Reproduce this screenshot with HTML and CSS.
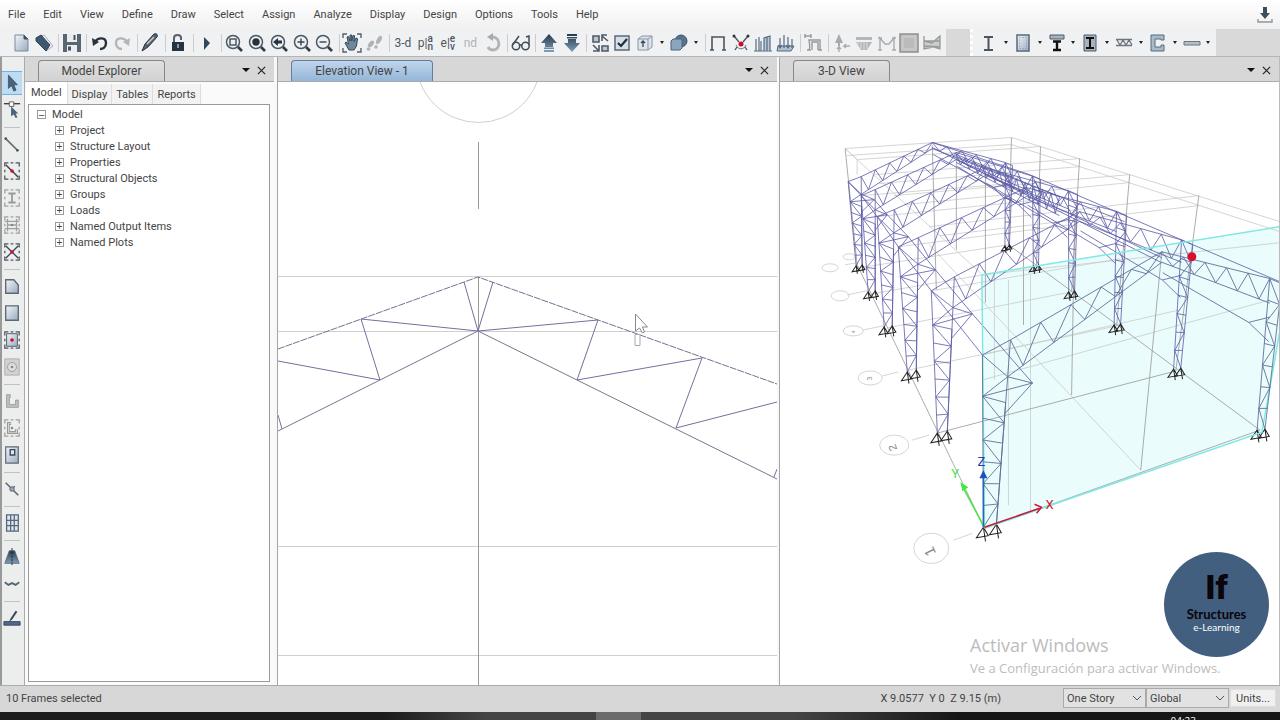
FILE: index.html
```html
<!DOCTYPE html>
<html lang="en">
<head>
<meta charset="utf-8">
<title>Structural Model</title>
<link rel="stylesheet" href="styles.css">
</head>
<body>
<svg class="defs" aria-hidden="true">
  <defs>
    <linearGradient id="steel" x1="0" y1="0" x2="1" y2="1"><stop offset="0" stop-color="#f2f5f9"/><stop offset="1" stop-color="#9aabc0"/></linearGradient>
    <linearGradient id="deep" x1="0" y1="0" x2="0" y2="1"><stop offset="0" stop-color="#26384c"/><stop offset="1" stop-color="#7f9fb8"/></linearGradient>
    <symbol id="lens" viewBox="0 0 20 20"><circle cx="9" cy="9" r="6.5" fill="#eef1f4" stroke="#4d5762" stroke-width="1.5"/><path d="M14 14l4 4" stroke="#333b44" stroke-width="2.6"/></symbol>
    <symbol id="dashbox" viewBox="0 0 20 20"><path d="M2 5V1h4M8.500 1h3M14 1h4v4M18 8.500v3M18 15v4h-4M11.500 19h-3M6 19H2v-4M2 11.500v-3" fill="none" stroke="currentColor" stroke-width="1.4"/></symbol>
    <symbol id="arrow" viewBox="0 0 20 20"><path d="M6 1v15l3.500-3 2.500 6 2.500-1-2.500-6h4z" fill="#4b6279" stroke="#2f4257" stroke-width=".7"/></symbol>
  </defs>
</svg>
<div class="app">
  <header class="top">
    <nav class="menu">
      <button>File</button><button>Edit</button><button>View</button><button>Define</button><button>Draw</button><button>Select</button><button>Assign</button><button>Analyze</button><button>Display</button><button>Design</button><button>Options</button><button>Tools</button><button>Help</button>
      <button class="download" aria-label="Download"><svg viewBox="0 0 16 16"><path d="M6 0h4v6h3l-5 6-5-6h3z" fill="#3c4d5c"/><path d="M1 12v3h14v-3" fill="none" stroke="#8b959d" stroke-width="1.4"/></svg></button>
    </nav>
    <div class="bars">
      <div class="bar bar-main">
        <button aria-label="New"><svg viewBox="0 0 20 20"><path d="M4 2h9l4 4v12H4z" fill="url(#steel)" stroke="#7d8a99"/><path d="M13 2v4h4" fill="#3f5065" stroke="#3f5065"/></svg></button>
        <button aria-label="Open"><svg viewBox="0 0 20 20"><path d="M2 5l8-3 9 11-7 5z" fill="#f4f5f6" stroke="#a5adb5"/><path d="M2 5l5-3 9 10-4 6L2 8z" fill="#3e5870" stroke="#2f4256"/></svg></button>
        <i class="sep"></i>
        <button aria-label="Save"><svg viewBox="0 0 20 20"><path d="M1 1h18v18H1z" fill="#5a6570"/><path d="M5 1h10v8H5zM5 12h10v7H5z" fill="#e9edf1"/><path d="M11.500 2h2v5h-2zM6 13.500h3v4H6z" fill="#49545f"/></svg></button>
        <i class="sep"></i>
        <button aria-label="Undo"><svg viewBox="0 0 20 20"><path d="M5 9c3-5 11-5 11 1 0 4-3 6-6 6" fill="none" stroke="#26333f" stroke-width="2.400"/><path d="M2 5l1 8 6-4z" fill="#26333f"/></svg></button>
        <button aria-label="Redo"><svg viewBox="0 0 20 20"><path d="M15 9C12 4 4 4 4 10c0 4 3 6 6 6" fill="none" stroke="#b5b5b5" stroke-width="2.400"/><path d="M18 5l-1 8-6-4z" fill="#b5b5b5"/></svg></button>
        <i class="sep"></i>
        <button aria-label="Edit"><svg viewBox="0 0 20 20"><path d="M2 18l3-7L14 1c3-1 4 1 3 3L8 14z" fill="#59636d" stroke="#29323b"/><path d="M7 11l7-7" stroke="#c8d0d8" stroke-width="1.500"/></svg></button>
        <i class="sep"></i>
        <button aria-label="Unlock"><svg viewBox="0 0 20 20"><path d="M6 9V5c0-4 7-4 7 0v2" fill="none" stroke="#56616b" stroke-width="2"/><path d="M4 9h12v9H4z" fill="#25323f"/><path d="M9 11h2v4H9z" fill="#8798a8"/></svg></button>
        <i class="sep"></i>
        <button aria-label="Run"><svg viewBox="0 0 20 20"><path d="M8 4l6 6-6 7z" fill="#33475a"/></svg></button>
        <i class="sep"></i>
        <button aria-label="Zoom window"><svg viewBox="0 0 20 20"><use href="#lens"/><path d="M6 6h6v6H6z" fill="none" stroke="#4d5762" stroke-width="1.500"/></svg></button>
        <button aria-label="Zoom full"><svg viewBox="0 0 20 20"><use href="#lens"/><circle cx="9" cy="9" r="3.700" fill="#26333f"/></svg></button>
        <button aria-label="Zoom previous"><svg viewBox="0 0 20 20"><use href="#lens"/><path d="M4 9l5-4v2.500h4v3H9V13z" fill="#26333f"/></svg></button>
        <button aria-label="Zoom in"><svg viewBox="0 0 20 20"><use href="#lens"/><path d="M5.500 9h7M9 5.500v7" stroke="#39444e" stroke-width="1.400"/></svg></button>
        <button aria-label="Zoom out"><svg viewBox="0 0 20 20"><use href="#lens"/><path d="M5.500 9h7" stroke="#39444e" stroke-width="1.400"/></svg></button>
        <i class="sep"></i>
        <button aria-label="Pan"><svg viewBox="0 0 20 20"><path d="M1 5V1h4M15 1h4v4M19 15v4h-4M5 19H1v-4" fill="none" stroke="#56616b" stroke-width="1.400"/><path d="M7 17L3 10l1-1 2.500 2L5 4l1.500-.5L8 8V2h1.700v6L11 2.500l1.600.2-.6 6L14 5l1.500.6-1 7.400-2.500 4z" fill="#71889c" stroke="#34485b"/></svg></button>
        <button aria-label="Walk"><svg viewBox="0 0 20 20" fill="#b3b3b3"><ellipse cx="6" cy="11" rx="2.200" ry="4" transform="rotate(40 6 11)"/><ellipse cx="14" cy="7" rx="2.200" ry="4.500" transform="rotate(30 14 7)"/><circle cx="3.500" cy="16" r="1.800"/><circle cx="11" cy="14" r="1.800"/></svg></button>
        <i class="sep"></i>
        <button class="word">3-d</button>
        <button class="word" aria-label="Plan">p|<span class="pair"><b>a</b><b>n</b></span></button>
        <button class="word" aria-label="Elevation">e|<span class="pair"><b>e</b><b>v</b></span></button>
        <button class="word off">nd</button>
        <button aria-label="Rotate"><svg viewBox="0 0 20 20"><path d="M9 4c9 0 9 13 1 13-2 0-4-1-5-3" fill="none" stroke="#b3b3b3" stroke-width="2.800"/><path d="M10 0v8L4 4z" fill="#aaa"/></svg></button>
        <i class="sep"></i>
        <button aria-label="Object view"><svg viewBox="0 0 20 20" fill="#edf0f2" stroke="#414c57" stroke-width="1.500"><circle cx="5" cy="13" r="3.700"/><circle cx="14.500" cy="13" r="3.700"/><path d="M1.500 12L8 3M18 12V3l-3 1M8.500 12h2.500" fill="none"/></svg></button>
        <i class="sep"></i>
        <button aria-label="Move up"><svg viewBox="0 0 20 20"><path d="M10 1l8 9h-4v4H6v-4H2zM5 14.500h10v1.500H5zM5 17h10v2H5z" fill="url(#deep)"/></svg></button>
        <button aria-label="Move down"><svg viewBox="0 0 20 20"><path d="M10 19l8-9h-4V6H6v4H2zM5 4h10v1.500H5zM5 1h10v2H5z" fill="url(#deep)"/></svg></button>
        <i class="sep"></i>
        <button aria-label="Shrink objects"><svg viewBox="0 0 20 20"><path d="M3 3h6v6H3zM12 13h6v5h-6z" fill="#bcc7d2" stroke="#4f5b67" stroke-width="1.600"/><path d="M18 8l-6-5M12 8V2h5M3 12l6 6M9 12v6H3" fill="none" stroke="#4f5b67" stroke-width="1.600"/></svg></button>
        <button aria-label="Display options"><svg viewBox="0 0 20 20"><path d="M3 3h14v14H3z" fill="#d5dfe8" stroke="#59697a" stroke-width="1.500"/><path d="M6 10l3 3 6-7" fill="none" stroke="#222d39" stroke-width="2.200"/></svg></button>
        <button aria-label="Assignments"><svg viewBox="0 0 20 20"><path d="M3 6l4-3h10v11l-4 3H3zM3 6h10v11M13 6l4-3" fill="#dde4eb" stroke="#8795a3"/><path d="M8 8v6M6 10l2-2 2 2" fill="none" stroke="#344659" stroke-width="1.300"/></svg></button>
        <button class="drop" aria-label="Assignment list"></button>
        <button aria-label="Solids"><svg viewBox="0 0 20 20"><circle cx="12" cy="8" r="6" fill="#57738f" stroke="#3d536a"/><path d="M2 8l2-2h9v9l-2 2H2z" fill="#8ba5bd" stroke="#4c647c"/></svg></button>
        <button class="drop" aria-label="Solids list"></button>
        <i class="sep"></i>
        <button aria-label="Frame shape"><svg viewBox="0 0 20 20"><path d="M4 17V4h12v13M2 17h4M14 17h4" fill="none" stroke="#4c545d" stroke-width="1.600"/></svg></button>
        <button aria-label="Joint loads"><svg viewBox="0 0 20 20"><path d="M3 3l5 6M17 3l-5 6M6 14l-2 3M14 14l2 3" fill="none" stroke="#49535c" stroke-width="1.300"/><circle cx="3" cy="3" r="1.500" fill="#333"/><circle cx="17" cy="3" r="1.500" fill="#333"/><circle cx="10" cy="11" r="2.500" fill="#c8102a"/><path d="M5 12c2 5 8 5 10 0" fill="none" stroke="#66717c"/></svg></button>
        <button aria-label="Frame loads"><svg viewBox="0 0 20 20"><path d="M11 17V5l6-2v14z" fill="#b9c8d8"/><path d="M1 18h18M3 18V6M6 18V4M11 18V5l6-2v15M14 4v14M8 18V8" fill="none" stroke="#566b80" stroke-width="1.200"/></svg></button>
        <button aria-label="Shell loads"><svg viewBox="0 0 20 20"><path d="M2 13h16l-3 5H1z" fill="#afc0d0" stroke="#566b80"/><path d="M4 5v10M8 2v13M12 4v11M16 6v9M2 12l2 3 2-3M10 12l2 3 2-3" fill="none" stroke="#566b80" stroke-width="1.200"/></svg></button>
        <i class="sep"></i>
        <button aria-label="Deformed shape"><svg viewBox="0 0 20 20" fill="none" stroke="#999" stroke-width="1.400"><path d="M5 17c2-4 0-7 0-10h11v10M3 17h4M14 17h4M8 17V9h6v8M1 1v4M1 3h6M7 1v4"/></svg></button>
        <i class="sep"></i>
        <button aria-label="Reactions"><svg viewBox="0 0 20 20"><path d="M7 1l4 9H3zM6 10h2v3H6z" fill="#aaa"/><path d="M7 19v-6M5 16l2-2 2 2M18 13h-6l2-2M12 13l2 2" fill="none" stroke="#aaa" stroke-width="1.400"/></svg></button>
        <button aria-label="Soil pressure"><svg viewBox="0 0 20 20"><path d="M2 4h16v3H2zM2 9h16l-5 8H7z" fill="#b5b5b5"/><path d="M4 9v4M7 9v7M10 9v8M13 9v7" stroke="#ddd"/></svg></button>
        <button aria-label="Force diagrams"><svg viewBox="0 0 20 20"><path d="M3 17V5l5 6h4l5-6v12M1 17h4M15 17h4M1 5h4M15 5h4" fill="none" stroke="#aaa" stroke-width="1.400"/></svg></button>
        <button aria-label="Shell stresses"><svg viewBox="0 0 20 20"><path d="M1 1h18v18H1z" fill="#c3c3c3" stroke="#909090" stroke-width="1.500"/><path d="M4 4h12v12H4z" fill="#bbb" stroke="#d0d0d0"/></svg></button>
        <button aria-label="Strip forces"><svg viewBox="0 0 20 20"><path d="M2 8l8 2 8-7v13l-7-2-9 2zM2 3v13M2 8h16M2 13l16 1" fill="#ccc" stroke="#999" stroke-width="1.300"/></svg></button>
      </div>
      <div class="bar bar-sections">
        <button aria-label="Steel frame"><svg viewBox="0 0 20 20"><path d="M5 4h9M9.500 4v12M5 17h9" fill="none" stroke="#4c545d" stroke-width="2"/></svg></button><button class="drop" aria-label="Steel frame list"></button>
        <button aria-label="Concrete frame"><svg viewBox="0 0 20 20"><path d="M4 2h12v16H4z" fill="url(#steel)" stroke="#58687a" stroke-width="1.500"/><path d="M6.500 4.500h7v11h-7z" fill="none" stroke="#7f93aa" stroke-dasharray="1 2"/></svg></button><button class="drop" aria-label="Concrete frame list"></button>
        <button aria-label="Composite beam"><svg viewBox="0 0 20 20"><path d="M3 2h14v4H3z" fill="#a9b3be" stroke="#4f5a66"/><path d="M6 8.500h8M10 8v9M6 17h8" stroke="#111" stroke-width="2.400"/></svg></button><button class="drop" aria-label="Composite beam list"></button>
        <button aria-label="Composite column"><svg viewBox="0 0 20 20"><path d="M4 2h12v16H4z" fill="#a7b2be" stroke="#4f5a66"/><path d="M6 5h8M10 5v10M6 15h8" stroke="#111" stroke-width="2"/></svg></button><button class="drop" aria-label="Composite column list"></button>
        <button aria-label="Steel joist"><svg viewBox="0 0 20 20"><path d="M2 6.500h16M2 12.500h16M3 7l3 5 3-5 3 5 3-5 3 5" fill="none" stroke="#6c747d" stroke-width="1.300"/></svg></button><button class="drop" aria-label="Steel joist list"></button>
        <button aria-label="Shear wall"><svg viewBox="0 0 20 20"><path d="M3 2h13v5h-3V6H7v8h6v-2h3v6H3z" fill="#a9bac9" stroke="#596b7c"/></svg></button><button class="drop" aria-label="Shear wall list"></button>
        <button aria-label="Slab"><svg viewBox="0 0 20 20"><path d="M2 8.500h16v3.500H2z" fill="#b8bec5" stroke="#6d757d"/></svg></button><button class="drop" aria-label="Slab list"></button>
      </div>
    </div>
  </header>

  <main class="work">
    <aside class="tools">
      <button class="picked" aria-label="Select"><svg viewBox="0 0 20 20"><use href="#arrow"/></svg></button>
      <button aria-label="Reshape"><svg viewBox="0 0 20 20"><path d="M1 3h18" stroke="#444" stroke-width="1.500"/><path d="M7 1h5v5H7z" fill="#fff" stroke="#555"/><path d="M9 6v11l3-2 2 4 2-1-2-4h3z" fill="#4b6279"/></svg></button>
      <i class="rule"></i>
      <button aria-label="Draw beam"><svg viewBox="0 0 20 20"><path d="M3 4l13 13" stroke="#606b75" stroke-width="1.800"/><circle cx="3" cy="4" r="1.500" fill="#4b5660"/><circle cx="16" cy="17" r="1.500" fill="#4b5660"/></svg></button>
      <button class="dark" aria-label="Quick beam"><svg viewBox="0 0 20 20"><use href="#dashbox"/><path d="M3 3l14 14" stroke="#3b4753" stroke-width="1.700"/><circle cx="10" cy="10" r="2" fill="#c8102a"/></svg></button>
      <button class="faint" aria-label="Quick column"><svg viewBox="0 0 20 20"><use href="#dashbox"/><path d="M6 5h8M10 5v10M6 15h8" stroke="#999" stroke-width="2"/></svg></button>
      <button class="faint" aria-label="Secondary beams"><svg viewBox="0 0 20 20"><use href="#dashbox"/><path d="M5 3v14M15 3v14M2 6h16M2 14h16M5 10h10" stroke="#a0a0a0" stroke-width="1.400"/><circle cx="10" cy="10" r="1.500" fill="#888"/></svg></button>
      <button class="dark" aria-label="Quick braces"><svg viewBox="0 0 20 20"><use href="#dashbox"/><path d="M3 3l14 14M17 3L3 17" stroke="#3b4753" stroke-width="1.500"/><circle cx="10" cy="10" r="2" fill="#c8102a"/></svg></button>
      <i class="rule"></i>
      <button aria-label="Draw area"><svg viewBox="0 0 20 20"><path d="M3 3h9l5 6v9H3z" fill="url(#steel)" stroke="#5d6874" stroke-width="1.500"/></svg></button>
      <button aria-label="Draw rectangle"><svg viewBox="0 0 20 20"><path d="M3 2h14v16H3z" fill="url(#steel)" stroke="#5d6874" stroke-width="1.500"/></svg></button>
      <button class="dark" aria-label="Quick area"><svg viewBox="0 0 20 20"><path d="M4 3h12v14H4z" fill="url(#steel)"/><use href="#dashbox"/><path d="M4 3h12v14H4z" fill="none" stroke="#4b5661"/><circle cx="10" cy="10" r="2" fill="#c8102a"/></svg></button>
      <button aria-label="Quick opening"><svg viewBox="0 0 20 20"><path d="M2 1h16v18H2z" fill="#d2d2d0" stroke="#aaa"/><circle cx="10" cy="10" r="5" fill="#dededc" stroke="#999"/><circle cx="10" cy="10" r="1.500" fill="#888"/></svg></button>
      <i class="rule"></i>
      <button aria-label="Draw wall"><svg viewBox="0 0 20 20"><path d="M8 3H4v14h13V9h-3v5H7V6h1z" fill="#c2c2c0" stroke="#999"/></svg></button>
      <button class="faint" aria-label="Quick wall"><svg viewBox="0 0 20 20"><use href="#dashbox"/><path d="M9 4H5v12h11v-5M9 6H7v8h7v-3" fill="none" stroke="#999" stroke-width="1.200"/><circle cx="10" cy="10" r="1.500" fill="#888"/></svg></button>
      <button aria-label="Wall opening"><svg viewBox="0 0 20 20"><path d="M3 1h14v18H3z" fill="url(#steel)" stroke="#5d6874" stroke-width="1.300"/><path d="M8 4h5v6H8z" fill="#dfe6ee" stroke="#3b4753" stroke-width="1.500"/></svg></button>
      <i class="rule"></i>
      <button aria-label="Link"><svg viewBox="0 0 20 20"><path d="M3 3l14 14M8 12l5-5" stroke="#5b6670" stroke-width="1.700"/><circle cx="10" cy="10" r="2.500" fill="#9aa4ad" stroke="#5b6670"/></svg></button>
      <i class="rule"></i>
      <button aria-label="Grid"><svg viewBox="0 0 20 20"><path d="M4 1h13v18H4zM4 7h13M4 13h13M8.500 1v18M12.500 1v18" fill="#dfe7ee" stroke="#53667a" stroke-width="1.400"/></svg></button>
      <i class="rule"></i>
      <button aria-label="Tower"><svg viewBox="0 0 20 20"><path d="M7 3h6l5 14H2z" fill="url(#deep)" stroke="#5b6d7f"/><path d="M10 0v20" stroke="#222" stroke-dasharray="3 1"/></svg></button>
      <button aria-label="Tendon"><svg viewBox="0 0 20 20"><path d="M2 8l4 3 4-2 4 2 4-3" fill="none" stroke="#546474" stroke-width="2"/></svg></button>
      <i class="rule"></i>
      <button aria-label="Strip"><svg viewBox="0 0 20 20"><path d="M8 11l6-9 2 1-6 9-3 2z" fill="#3b4753"/><path d="M1 14h18v4H1z" fill="#50698a" stroke="#31445a"/></svg></button>
    </aside>

    <section class="pane explorer">
      <div class="title"><h2 class="cap cap-explorer">Model Explorer</h2><button class="tri" aria-label="Explorer menu"></button><button class="close" aria-label="Close explorer"><svg viewBox="0 0 10 10"><path d="M1 1l8 8M9 1L1 9"/></svg></button></div>
      <div class="tabs"><button class="on">Model</button><button>Display</button><button>Tables</button><button>Reports</button></div>
      <div class="treebox">
        <ul class="tree">
          <li><span class="node open">Model</span>
            <ul>
              <li><span class="node">Project</span></li>
              <li><span class="node">Structure Layout</span></li>
              <li><span class="node">Properties</span></li>
              <li><span class="node">Structural Objects</span></li>
              <li><span class="node">Groups</span></li>
              <li><span class="node">Loads</span></li>
              <li><span class="node">Named Output Items</span></li>
              <li><span class="node">Named Plots</span></li>
            </ul>
          </li>
        </ul>
      </div>
    </section>

    <section class="pane view view-elev">
      <div class="title"><h2 class="cap cap-elev">Elevation View - 1</h2><button class="tri" aria-label="Elevation menu"></button><button class="close" aria-label="Close elevation"><svg viewBox="0 0 10 10"><path d="M1 1l8 8M9 1L1 9"/></svg></button></div>
      <svg class="scene" viewBox="278 82 499 603" preserveAspectRatio="xMidYMid slice" role="img" aria-label="Elevation of roof truss">
        <g fill="none" stroke="#cfcfcf" stroke-width="1">
          <circle cx="478.500" cy="60" r="62.500"/>
          <path d="M278 276.500H777M278 331.500H777M278 546.500H777M278 655.500H777"/>
          <path d="M478.500 142v67M478.500 277v408" stroke="#999"/>
        </g>
        <g fill="none" stroke="#71719f" stroke-width="1">
          <path d="M278 349L478 277L777 384" stroke="#73738f" stroke-dasharray="7 1"/>
          <path d="M278 431L478 331L777 479" stroke="#777790"/>
          <path d="M464 282L478 331L493 282M278 361L380 380L361 319L478 331L598 320L577 380L702 358L676 428L777 402M278 415l4 14M777 469l-3 8"/>
        </g>
        <path d="M635.500 314v17l4-3 3 5 2-1-2-5h5z" fill="#fff" stroke="#888"/>
        <path d="M635 334.500h5v11h-5z" fill="#fff" stroke="#aaa"/>
      </svg>
    </section>

    <section class="pane view view-three">
      <div class="title"><h2 class="cap cap-three">3-D View</h2><button class="tri" aria-label="3-D menu"></button><button class="close" aria-label="Close 3-D"><svg viewBox="0 0 10 10"><path d="M1 1l8 8M9 1L1 9"/></svg></button></div>
      <svg class="scene" viewBox="781 82 498 603" preserveAspectRatio="xMidYMid slice" role="img" aria-label="3-D model of steel hall">
        <path d="M982 275L1280 227V335L1262 432L985 528z" fill="#eafcfc"/>
        <g fill="none" stroke="#cbcbcb" stroke-width=".8">
          <path d="M846 149L1012 138L1280 222M848 156L1012 145L1280 232M846 149L983 275M846 149L858 160V175M859 160L1041 147M876 175L1080 159M895 196L1130 175M930 227L1199 196M880 184L1080 167M905 205L1130 183M940 236L1199 206M983 275L1280 243M862 196L1012 184M878 217L1040 200M899 247L1072 225M932 291L1120 259M983 355L1180 310"/>
          <path d="M860 268L1009 245M872 294L1037 266M888 328L1072 292M910 370L1117 326M1141 470L930 245M983 380L1270 300M1009 280V505M1031 275V510M995 274V380"/>
          <path d="M846 265l12-2M848 295l20-4M864 330l20-4M883 376l16-4M913 440l17-5M954 540l19-7"/>
          <ellipse cx="831" cy="268" rx="8" ry="4"/><ellipse cx="850" cy="257" rx="6" ry="3"/><ellipse cx="841" cy="296" rx="9" ry="5"/><ellipse cx="854" cy="331" rx="10" ry="5"/><ellipse cx="871" cy="378" rx="12" ry="7"/><ellipse cx="895" cy="445" rx="14.500" ry="10"/><ellipse cx="932" cy="548" rx="17.500" ry="15"/>
        </g>
        <g fill="none" stroke="#a3a3a3" stroke-width=".9">
          <path d="M846 149L858 265L985 528L1260 430L1009 245M938 433L1176 371M1012 138L1009 245M933 146L937 290M957 154V250M986 168V303M1041 147L1037 266M1080 159L1072 292M1130 175L1117 326M1199 196L1176 371M1024 190V325M1075 220L1072 395M1162 252L1141 470"/>
        </g>
        <g class="marks"><text transform="translate(937 553) rotate(-115)" font-size="15">1</text><text transform="translate(898 449) rotate(-110)" font-size="11">2</text><text transform="translate(873 380) rotate(-100)" font-size="7">3</text><text transform="translate(856 333) rotate(-100)" font-size="5">4</text></g>
        <g id="members" fill="none" stroke="#5a5aa6" stroke-width=".8"></g>
        <g id="supports" fill="none" stroke="#222" stroke-width="1"></g>
        <path d="M985 528L982.500 275L1280 227M985 528L1262 432L1280 330" fill="none" stroke="#7fe9e6" stroke-width="1.500"/>
        <g id="front" fill="none" stroke="#60709a" stroke-width=".9"></g>
        <circle cx="1192" cy="257" r="4.500" fill="#d80f2f"/>
        <g fill="none" stroke-width="1.500">
          <path d="M985 527L963 486" stroke="#45e545"/><path d="M961 482l8 5-6 4z" fill="#45e545"/>
          <path d="M984 527V474" stroke="#2467b8"/><path d="M984 470l4 8h-8z" fill="#1c50c0"/>
          <path d="M985 527L1040 508M1035 504l7 3-5 6" stroke="#c51c35"/>
        </g>
        <g class="axes" font-size="13"><text x="978" y="466" fill="#1c41c0">Z</text><text x="952" y="478" fill="#45e545">Y</text><text x="1046" y="509" fill="#c51c35">X</text></g>
      </svg>
      <div class="notice"><p class="notice-head">Activar Windows</p><p>Ve a Configuración para activar Windows.</p></div>
      <div class="badge"><strong class="badge-mark">If</strong><span class="badge-name">Structures</span><span class="badge-sub">e-Learning</span></div>
    </section>
  </main>

  <footer class="status">
    <span class="message">10 Frames selected</span>
    <span class="coords">X 9.0577&nbsp; Y 0&nbsp; Z 9.15 (m)</span>
    <select aria-label="Story scope"><option>One Story</option></select>
    <select aria-label="Coordinate system"><option>Global</option></select>
    <button class="units">Units...</button>
  </footer>
  <div class="taskbar"><i class="task"></i><time class="clock">04:23</time></div>
</div>
<script src="model.js"></script>
</body>
</html>
```
FILE: styles.css
```css
*, *::before { box-sizing: border-box; }
body { margin: 0; background: #fff; color: #444; font: 12px "Open Sans", "Noto Sans", sans-serif; }
button, select { font: inherit; color: inherit; }
button { border: 0; padding: 0; background: none; }
h2, p, ul { margin: 0; padding: 0; }
ul { list-style: none; }
.defs { position: absolute; width: 0; height: 0; }
.app { display: flex; flex-direction: column; height: 100vh; overflow: hidden; }

.top { background: linear-gradient(#fff, #f0f0f0 29px); }
.menu { display: flex; align-items: center; gap: 18px; height: 29px; padding: 0 7px 0 8px; font: 11px Roboto, sans-serif; }
.download { margin-left: auto; width: 16px; height: 16px; }
.bars { display: flex; height: 28px; background: #d9d9d9; border-bottom: 1px solid #b5b5b5; }
.bar { display: flex; align-items: center; justify-content: space-between; background: #f0f1f2; }
.bar-main { flex: 0 1 946px; padding: 0 4px 0 11px; }
.bar-sections { flex: 0 1 246px; margin-left: 24px; padding: 0 3px 0 6px; border-left: 3px dotted #fff; }
.bar button { flex: none; width: 20px; height: 20px; }
.bar svg, .tools svg, .download svg, .close svg { display: block; width: 100%; height: 100%; }
.sep { flex: none; width: 3px; height: 18px; border-right: 1px solid #ccc; }
.bar .drop { width: 9px; }
.drop::before { content: ""; display: block; width: 4px; margin: auto; border: 2px solid transparent; border-top: 3px solid #222; border-bottom: 0; }
.bar .word { display: flex; align-items: center; justify-content: center; font: 12px/20px Roboto, sans-serif; color: #4d565f; }
.bar .off { color: #b3b3b3; }
.pair { display: grid; }
.pair b { font-size: 10px; line-height: 8px; font-weight: 500; }

.work { flex: 1; display: flex; min-height: 0; }
.tools { flex: none; width: 25px; display: flex; flex-direction: column; align-items: center; gap: 3px; padding: 14px 2px 0 0; background: #eceded; border-left: 2px solid #999; border-right: 1px solid #aaa; }
.tools button { flex: none; width: 20px; height: 24px; padding: 3px 1px; }
.tools .picked { background: #bcdcf4; border: solid #79afd8; border-width: 1px 0; padding: 2px 0; }
.tools .dark { color: #4b5661; }
.tools .faint { color: #a0a0a0; }
.rule { flex: none; width: 16px; height: 4px; background: linear-gradient(#c2c2c2, #c2c2c2) center / 100% 1px no-repeat; }

.pane { position: relative; display: flex; flex-direction: column; min-width: 0; }
.title { flex: none; display: flex; align-items: flex-end; height: 25px; padding-right: 8px; background: #d7d7d7; border-bottom: 1px solid #aaa; }
.cap { height: 21px; padding: 0 18px; border: 1px solid #888; border-bottom: 0; border-radius: 4px 4px 0 0; background: linear-gradient(#e0e0e0, #d2d2d2); font: 12px/20px Roboto, sans-serif; text-align: center; white-space: nowrap; }
.cap-explorer { margin-left: 13px; min-width: 127px; }
.cap-elev { margin-left: 13px; min-width: 142px; background: linear-gradient(#c0d5ec, #94b6d8); border-color: #627f9d; }
.cap-three { margin-left: 13px; min-width: 97px; }
.tri { margin: 0 7px 9px auto; border: 4px solid transparent; border-top: 4px solid #111; border-bottom: 0; }
.close { width: 9px; height: 9px; margin-bottom: 6px; }
.close path { stroke: #222; stroke-width: 1.3; }

.explorer { flex: 0 0 252px; background: #fafafa; border-right: 3px solid #f8f8f8; font: 11px Roboto, sans-serif; }
.tabs { display: flex; align-items: flex-end; height: 22px; padding-left: 1px; }
.tabs button { height: 20px; padding: 0 4px; background: #f2f2f2; border-right: 1px solid #ddd; }
.tabs .on { height: 22px; padding: 0 5px 2px; background: #fff; }
.treebox { flex: 1; margin: 0 4px 3px 3px; padding: 1px 0 0 8px; background: #fff; border: 1px solid #9a9a9a; }
.tree ul { padding-left: 18px; }
.node { display: flex; align-items: center; height: 16px; }
.node::before { content: "+"; flex: none; width: 9px; height: 9px; margin-right: 6px; border: 1px solid #999; font: 10px/7px "Liberation Sans", sans-serif; text-align: center; }
.open::before { content: "–"; }

.view { border-left: 1px solid #a5a5a5; background: #fff; }
.view-elev { flex: 1 1 3px; border-right: 2px solid #f8f8f8; }
.view-three { flex: 1 1 0; border-right: 1px solid #bbb; }
.scene { display: block; flex: 1; width: 100%; min-height: 0; }
.marks { fill: #888; font-family: "Liberation Sans", sans-serif; }
.axes { font-family: Roboto, sans-serif; }
.notice { position: absolute; left: 190px; bottom: 7px; color: #bcbcbc; font: 13px/20px "Open Sans", sans-serif; white-space: nowrap; }
.notice-head { font-size: 18px; line-height: 26px; }
.badge { position: absolute; right: 10px; bottom: 28px; width: 105px; height: 105px; display: flex; flex-direction: column; align-items: center; padding-top: 15px; border-radius: 50%; background: #425f7f; color: #0a0509; font-family: Lato, sans-serif; }
.badge-mark { font: 900 34px/40px Roboto, sans-serif; }
.badge-name { font-size: 13px; line-height: 14px; font-weight: 700; }
.badge-sub { font-size: 10px; line-height: 12px; color: #fff; }

.status { flex: none; display: flex; align-items: center; height: 27px; padding: 0 4px 2px 6px; background: #d7d7d7; border-top: 1px solid #aaa; font: 11px Roboto, sans-serif; }
.message { margin-right: auto; }
.coords { margin-right: 62px; }
.status select { width: 83px; height: 20px; padding: 0 3px; appearance: none; border: 1px solid #aaa; border-radius: 0; background: #e2e2e2 url("data:image/svg+xml,%3Csvg xmlns='http://www.w3.org/2000/svg' width='8' height='6'%3E%3Cpath d='M0 1l4 4 4-4' fill='none' stroke='%23555'/%3E%3C/svg%3E") right 4px center no-repeat; }
.units { width: 46px; height: 18px; margin-left: 1px; background: #f0f0f0; border: 1px solid #ddd; }
.taskbar { flex: none; display: flex; height: 8px; overflow: hidden; padding-right: 84px; background: linear-gradient(90deg, #1c1c1c 30%, #444 38%, #444 62%, #161616 75%); }
.task { width: 45px; height: 8px; margin-left: 596px; background: #6b6b6b; }
.clock { margin: 3px 0 0 auto; color: #fff; font: 10px/12px "Open Sans", sans-serif; }
```
FILE: model.js
```js
const NS = "http://www.w3.org/2000/svg";
const mix = (a, b, t) => [a[0] + (b[0] - a[0]) * t, a[1] + (b[1] - a[1]) * t];

function draw(id, d) {
  const path = document.createElementNS(NS, "path");
  path.setAttribute("d", d);
  document.getElementById(id).appendChild(path);
}

// Two chords joined by rungs and diagonals.
function lattice(id, a0, a1, b0, b1, bays, rungs) {
  let d = `M${a0}L${a1}M${b0}L${b1}`;
  for (let i = 0; i < bays; i++) {
    const p = mix(a0, a1, i / bays), q = mix(b0, b1, i / bays);
    const p2 = mix(a0, a1, (i + 1) / bays), q2 = mix(b0, b1, (i + 1) / bays);
    if (rungs) d += `M${p}L${q}`;
    if (rungs) d += i % 2 ? `M${q}L${p2}` : `M${p}L${q2}`;
    else d += `M${p}L${mix(q, q2, 0.5)}L${p2}`;
  }
  draw(id, d);
}

function support(x, y, s) {
  draw("supports", `M${x} ${y}l${-s} ${s * 1.5}l${s * 1.7} ${-s * 0.3}zM${x} ${y}l${s * 0.3} ${s * 2}`);
}

// Left column: outer top/base, inner top/base; haunch; roof apex; right eave; right column foot.
const frames = [
  { o: [849, 182], ob: [857, 266], i: [862, 177], ib: [863, 265], h: [875, 200], a: [933, 143], r: [1013, 166], rb: [1010, 245] },
  { o: [862, 196], ob: [869, 292], i: [876, 190], ib: [876, 291], h: [888, 215], a: [957, 153], r: [1041, 180], rb: [1039, 265] },
  { o: [878, 217], ob: [885, 327], i: [895, 210], ib: [893, 326], h: [909, 237], a: [986, 168], r: [1078, 195], rb: [1075, 291] },
  { o: [899, 247], ob: [908, 372], i: [919, 238], ib: [917, 370], h: [936, 270], a: [1027, 188], r: [1127, 216], rb: [1121, 324] },
  { o: [932, 291], ob: [938, 433], i: [955, 277], ib: [948, 431], h: [973, 314], a: [1080, 212], r: [1193, 245], rb: [1181, 368] },
  { o: [983, 355], ob: [984, 527], i: [1011, 340], ib: [997, 524], h: [1033, 383], a: [1162, 252], r: [1282, 284], rb: [1265, 429] }
];

frames.forEach((f, n) => {
  const id = n === 5 ? "front" : "members";
  const s = 1 + n * 0.15;
  const low = [f.a[0], f.a[1] + 6 * s];
  const foot = [f.rb[0] - 4.5 * s, f.rb[1] + 1];
  const top = [f.r[0] - 7 * s, f.r[1] - 3 * s];
  const shoulder = mix(f.i, f.ib, 0.2);
  const waist = mix(f.o, f.ob, 0.24);
  lattice(id, waist, f.ob, mix(f.i, f.ib, 0.34), f.ib, 6, true);
  lattice(id, f.i, f.a, shoulder, low, 5, false);
  draw(id, `M${waist}L${f.o}L${f.i}L${f.ib}M${f.o}L${shoulder}L${waist}L${f.h}L${mix(f.i, f.ib, 0.4)}M${shoulder}L${f.h}`);
  lattice(id, f.a, top, low, [top[0], top[1] + 14 * s], 5, false);
  lattice(id, top, foot, f.r, f.rb, 7, true);
  support(f.ob[0], f.ob[1], 4 * s);
  support(f.ib[0], f.ib[1], 4 * s);
  support(foot[0], foot[1], 3.5 * s);
  support(f.rb[0], f.rb[1], 3.5 * s);
  const elbow = [top[0] - 12 * s, top[1] + 25 * s];
  draw(id, `M${[f.a[0] + 1, f.a[1] + 12 * s]}L${elbow}L${[top[0] - 1, top[1] + 36 * s]}M${elbow}L${[top[0], top[1] + 22 * s]}`);
});

// Longitudinal members along eaves, haunches and ridge.
["o", "h"].forEach(k => draw("members", "M" + frames.map(f => f[k]).join("L")));
draw("members", "M933 143L1030 175L1193 245L1280 282M957 157L1125 222M986 174L1162 258M957 160L1162 263M933 148L1027 195");
lattice("members", [957, 155], [1060, 197], [957, 163], [1060, 216], 12, false);
```
